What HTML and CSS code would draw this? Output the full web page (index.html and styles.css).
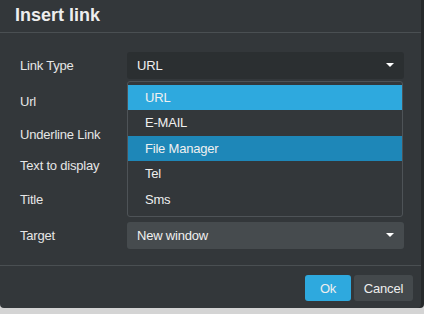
FILE: index.html
```html
<!DOCTYPE html>
<html lang="en">
<head>
  <meta charset="UTF-8" />
  <title>Insert link</title>
  <link rel="stylesheet" href="styles.css">
</head>
<body>

<div class="dialog">
  <div class="dialog-header">Insert link</div>

  <div class="dialog-body">
    <div class="row">
      <label>Link Type</label>
      <div class="select-wrap">
        <div class="select dark">URL <span class="caret"></span></div>
        <!-- open list -->
        <ul class="options">
          <li class="active">URL</li>
          <li>E-MAIL</li>
          <li class="hover">File Manager</li>
          <li>Tel</li>
          <li>Sms</li>
        </ul>
      </div>
    </div>
    <div class="row"><label>Url</label></div>
    <div class="row short"><label>Underline Link</label></div>
    <div class="row short"><label>Text to display</label></div>
    <div class="row"><label>Title</label></div>
    <div class="row">
      <label>Target</label>
      <div class="select">New window <span class="caret"></span></div>
    </div>
  </div>

  <div class="dialog-footer">
    <button class="btn primary">Ok</button>
    <button class="btn">Cancel</button>
  </div>
</div>

</body>
</html>
```

FILE: styles.css
```css
body {
  margin: 0;
  background: #d4d4d4;
  font-family: "Liberation Sans", Arial, sans-serif;
  color: #e8e8e8;
}
.dialog {
  width: 421px;
  height: 308px;
  background: #33373a;
  border-radius: 0 0 4px 4px;
  box-shadow: 3px 0 0 #26292b;
  display: flex;
  flex-direction: column;
  box-sizing: border-box;
}
.dialog-header {
  height: 33px;
  box-sizing: border-box;
  padding: 5px 15px 0;
  font-size: 18px;
  font-weight: 700;
  color: #eeeeee;
  border-bottom: 1px solid #4a4f52;
}
.dialog-body {
  padding: 14px 17px 0 20px;
  height: 233px;
  box-sizing: border-box;
  border-bottom: 1px solid #4a4f52;
}
.row {
  display: grid;
  grid-template-columns: 107px 1fr;
  align-items: center;
  height: 36px;
  font-size: 13px;
  letter-spacing: -0.2px;
}
.row.short {
  height: 31px;
}
.row label {
  color: #e6e6e6;
}
.select-wrap {
  position: relative;
}
.select {
  height: 27px;
  border-radius: 3px;
  background: #464b4e;
  color: #f0f0f0;
  padding: 0 10px;
  display: flex;
  align-items: center;
  justify-content: space-between;
}
.select.dark {
  background: #2b2f31;
}
.caret {
  width: 0;
  height: 0;
  border-left: 4px solid transparent;
  border-right: 4px solid transparent;
  border-top: 4px solid #ffffff;
}
.options {
  position: absolute;
  top: 29px;
  left: 0;
  right: 1px;
  margin: 0;
  padding: 3px 0 4px;
  list-style: none;
  background: #33373a;
  border: 1px solid #4e5357;
  border-radius: 3px;
  z-index: 10;
}
.options li {
  height: 25.5px;
  line-height: 25.5px;
  padding-left: 17px;
  color: #f0f0f0;
}
.options li.active {
  background: #2ea9de;
}
.options li.hover {
  background: #1e87b8;
}
.dialog-footer {
  flex: 1;
  display: flex;
  justify-content: flex-end;
  align-items: flex-start;
  gap: 3px;
  padding: 9px 8px 0 0;
}
.btn {
  height: 26px;
  border: none;
  border-radius: 3px;
  background: #44494c;
  color: #eeeeee;
  font-family: inherit;
  font-size: 13px;
  letter-spacing: -0.2px;
  width: 59px;
  padding: 0;
}
.btn.primary {
  background: #2ea9de;
  width: 46px;
}
```
